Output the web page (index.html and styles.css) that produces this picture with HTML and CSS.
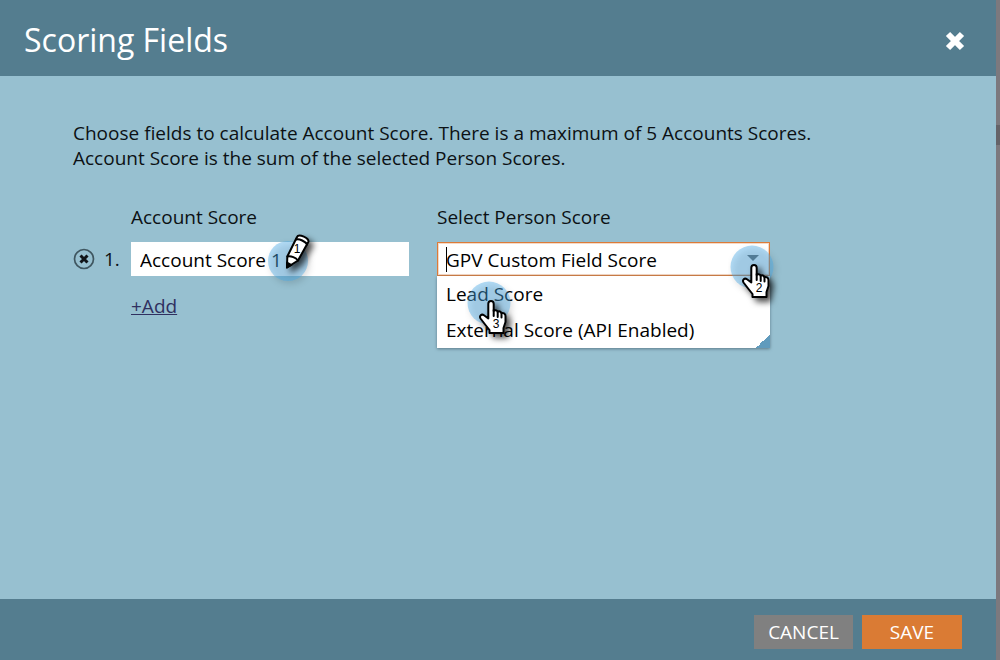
FILE: index.html
```html
<!DOCTYPE html>
<html lang="en">
<head>
<meta charset="utf-8">
<title>Scoring Fields</title>
<link rel="stylesheet" href="styles.css">
</head>
<body>
<svg class="defs" aria-hidden="true">
  <defs>
    <g id="hand">
      <path d="M14 3C15.700 3 16.700 4 16.700 5.800V13C17.500 11.800 20 12 20.700 13.800C22 12.800 24 13.500 24.500 15.200C26 14.500 28.500 15.500 28.500 18V24L26.500 30V35H12.500V32L8.500 27L3.500 20.500C2 18 4.500 15.500 7 17.300L11.300 20.500V5.800C11.300 4 12.300 3 14 3Z"/>
      <path d="M16.700 12V18M20.700 14V19M24.500 15.500V19.500"/>
    </g>
  </defs>
</svg>
<main class="dialog" role="dialog" aria-labelledby="title">
  <header class="header">
    <h1 class="title" id="title">Scoring Fields</h1>
    <button class="close" type="button" aria-label="Close">
      <svg width="20" height="20" viewBox="0 0 20 20"><path d="M3 3L17 17M17 3L3 17" stroke="#fff" stroke-width="6"/></svg>
    </button>
  </header>
  <section class="content">
    <p class="intro">Choose fields to calculate Account Score. There is a maximum of 5 Accounts Scores.<br>Account Score is the sum of the selected Person Scores.</p>
    <div class="fields">
      <label class="label account-label" for="account">Account Score</label>
      <label class="label person-label" for="person">Select Person Score</label>
      <div class="row-head">
        <button class="remove" type="button" aria-label="Remove">
          <svg width="22" height="22" viewBox="0 0 22 22" fill="none"><circle cx="11" cy="11" r="9.500" stroke="#3f5660" stroke-width="1.700"/><path d="M7.500 7.500l7 7M14.500 7.500l-7 7" stroke="#101418" stroke-width="3"/></svg>
        </button>
        <span>1.</span>
      </div>
      <div class="field">
        <input class="input" id="account" type="text" value="Account Score 1">
        <span class="marker marker-pencil">
          <svg width="60" height="60" viewBox="0 0 60 60"><circle class="halo" cx="28" cy="30" r="20"/>
            <g class="pointer"><path d="M27 36.500L27.300 25.500L37 6C38.500 2.500 50 7 48.300 11L38 29.500Z"/><path d="M36 8.500C39 7 46 11 47 13.500M27.500 25.500C31 24.500 36 27 38 29.500"/><path d="M27 36.500V31.500L31.500 34Z" fill="#000"/></g>
            <text class="digit" x="37" y="22">1</text></svg>
        </span>
      </div>
      <div class="field combo">
        <input class="input combo-input" id="person" type="text" role="combobox" aria-expanded="true" aria-controls="options" value="GPV Custom Field Score">
        <svg class="arrow" width="12" height="6" viewBox="0 0 12 6"><path d="M0 0h12L6 6z" fill="#666"/></svg>
        <ul class="options" id="options" role="listbox">
          <li class="option" role="option">Lead Score</li>
          <li class="option" role="option">External Score (API Enabled)</li>
        </ul>
        <span class="marker marker-open">
          <svg width="60" height="70" viewBox="0 0 60 70"><circle class="halo" cx="24" cy="26" r="21.500"/>
            <use class="pointer" href="#hand" x="12" y="21"/><text class="digit" x="31" y="51">2</text></svg>
        </span>
        <span class="marker marker-pick">
          <svg width="60" height="70" viewBox="0 0 60 70"><circle class="halo" cx="24" cy="26" r="21.500"/>
            <use class="pointer" href="#hand" x="12" y="21"/><text class="digit" x="31" y="51">3</text></svg>
        </span>
      </div>
      <a class="add" href="#add">+Add</a>
    </div>
  </section>
  <footer class="footer">
    <button class="button cancel" type="button">CANCEL</button>
    <button class="button save" type="button">SAVE</button>
  </footer>
</main>
</body>
</html>
```

FILE: styles.css
```css
* { box-sizing: border-box; }
body {
  margin: 0;
  min-height: 100vh;
  display: flex;
  padding-right: 4px;
  background: linear-gradient(#7c797e 125px, #656368 125px, #656368 145px, #7c797e 145px);
  color: #0c1114;
  font: 19px/26px "Open Sans", "Noto Sans", sans-serif;
}
button, input { font: inherit; color: inherit; border: 0; border-radius: 0; }
button { padding: 0; background: none; }
svg { display: block; }
.defs { position: absolute; width: 0; height: 0; }
.dialog { flex: 1; display: flex; flex-direction: column; background: #97c0d0; }
.header {
  display: flex;
  align-items: center;
  justify-content: space-between;
  padding: 20px 31px 16px 24px;
  background: #547d8f;
}
.title { margin: 0; color: #fff; font-size: 32px; line-height: 40px; font-weight: 400; }
.close { margin-top: 2px; }
.content { flex: 1; padding: 45px 73px; }
.intro { margin: 0 0 34px; line-height: 25px; }
.fields {
  display: grid;
  grid-template-columns: 58px 278px 28px 333px;
  align-items: center;
}
.label { margin-bottom: 12px; line-height: 25px; }
.account-label { grid-column: 2; }
.person-label { grid-column: 4; }
.row-head { display: flex; align-items: center; gap: 9px; }
.field { position: relative; }
.combo { grid-column: 4; }
.input { display: block; width: 100%; height: 34px; padding: 1px 9px 0; background: #fff; color: #000; outline: 0; }
.combo-input { padding: 1px 8px 0; border: 1px solid #dc7b38; box-shadow: inset 0 0 0 1px #f6d9c5; }
.combo::before {
  content: "";
  position: absolute;
  left: 9px;
  top: 5px;
  width: 1px;
  height: 25px;
  background: #000;
}
.arrow { position: absolute; right: 11px; top: 13px; }
.options {
  position: absolute;
  top: 100%;
  left: 0;
  right: 0;
  margin: 0;
  padding: 0;
  list-style: none;
  color: #000;
  background: linear-gradient(135deg, transparent 50%, #609bbd 50%) right bottom / 14px 14px no-repeat, #fff;
  box-shadow: 0 1px 3px #5c7a88;
}
.option { padding: 5px 9px; }
.marker { position: absolute; pointer-events: none; }
.marker-pencil { right: 89px; top: -11px; }
.marker-open { right: -18px; top: -1px; }
.marker-pick { left: 28px; top: 35px; }
.halo { fill: #48a9e7; fill-opacity: .42; filter: drop-shadow(2px 3px 3px rgb(0 0 0 / .3)); }
.pointer {
  fill: #fff;
  stroke: #000;
  stroke-width: 2;
  stroke-linejoin: round;
  stroke-linecap: round;
  filter: drop-shadow(4px 4px 3px rgb(0 0 0 / .7));
}
.digit { font: 12px "Liberation Sans", Arial, sans-serif; text-anchor: middle; fill: #000; }
.add { grid-column: 2; justify-self: start; margin-top: 17px; color: #303060; }
.footer { display: flex; justify-content: flex-end; gap: 9px; padding: 16px 34px 11px; background: #547d8f; }
.button { height: 34px; color: #fff; }
.cancel { width: 99px; background: #808080; }
.save { width: 100px; background: #da7b34; }
```
